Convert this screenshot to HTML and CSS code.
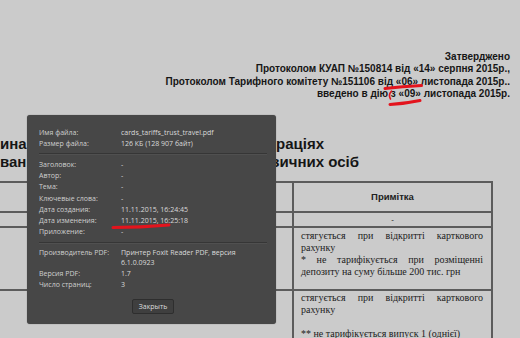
FILE: index.html
```html
<!DOCTYPE html>
<html lang="uk">
<head>
<meta charset="utf-8">
<title>Тарифи</title>
<link rel="stylesheet" href="styles.css">
</head>
<body>
<main class="doc">
  <div class="approval">
    <p>Затверджено</p>
    <p>Протоколом КУАП №150814 від «14» серпня 2015р.,</p>
    <p>Протоколом Тарифного комітету №151106 від «06» листопада 2015р..</p>
    <p>введено в дію з «09» листопада 2015р.</p>
  </div>
  <h1 class="title">
    <span class="title-line"><span class="title-left">инаги</span><span class="title-right">раціях</span></span>
    <span class="title-line"><span class="title-left narrow">ванн</span><span class="title-right">зичних осіб</span></span>
  </h1>
  <table class="tariffs">
    <colgroup><col class="col-main"><col class="col-note"></colgroup>
    <tr class="row-head"><th></th><th>Примітка</th></tr>
    <tr class="row-dash"><td></td><td class="center">-</td></tr>
    <tr class="row-a"><td></td><td><p>стягується при відкритті карткового рахунку</p><p>* не тарифікується при розміщенні депозиту на суму більше 200 тис. грн</p></td></tr>
    <tr class="row-b"><td></td><td><p>стягується при відкритті карткового рахунку</p><p class="spaced">** не тарифікується випуск 1 (однієї)</p></td></tr>
  </table>
</main>

<section class="props" aria-label="Свойства документа">
  <dl class="group">
    <dt>Имя файла:</dt><dd>cards_tariffs_trust_travel.pdf</dd>
    <dt>Размер файла:</dt><dd>126 КБ (128 907 байт)</dd>
  </dl>
  <hr class="sep">
  <dl class="group">
    <dt>Заголовок:</dt><dd>-</dd>
    <dt>Автор:</dt><dd>-</dd>
    <dt>Тема:</dt><dd>-</dd>
    <dt>Ключевые слова:</dt><dd>-</dd>
    <dt>Дата создания:</dt><dd>11.11.2015, 16:24:45</dd>
    <dt>Дата изменения:</dt><dd>11.11.2015, 16:25:18</dd>
    <dt>Приложение:</dt><dd>-</dd>
  </dl>
  <hr class="sep">
  <dl class="group">
    <dt>Производитель PDF:</dt><dd>Принтер Foxit Reader PDF, версия 6.1.0.0923</dd>
    <dt>Версия PDF:</dt><dd>1.7</dd>
    <dt>Число страниц:</dt><dd>3</dd>
  </dl>
  <div class="actions"><button class="btn" type="button">Закрыть</button></div>
</section>

<svg class="marks" width="520" height="338" viewBox="0 0 520 338" aria-hidden="true">
  <path d="M385 88.5 Q 402 86.5 421.5 85.5"/>
  <path d="M390 104.5 Q 406 103.5 420 100.5"/>
  <path class="thin" d="M391.5 91 Q 388 95 390.5 99"/>
  <path d="M113 227.5 Q 140 227.5 169 225"/>
</svg>
</body>
</html>
```

FILE: styles.css
```css
html, body {
  margin: 0;
  padding: 0;
}

body {
  width: 520px;
  height: 338px;
  overflow: hidden;
  background: #cbcbcb;
  position: relative;
  font-family: "Liberation Sans", Arial, sans-serif;
  color: #161616;
}

.doc {
  padding-top: 51px;
}

.approval {
  text-align: right;
  padding-right: 10px;
  font-weight: bold;
  font-size: 10px;
  line-height: 12.3px;
}

.approval p {
  margin: 0;
}

.title {
  margin: 35px 0 0;
  font-size: 15px;
  line-height: 17.7px;
  font-weight: bold;
}

.title-line {
  display: flex;
  white-space: nowrap;
}

.title-left {
  width: 276px;
  overflow: hidden;
  flex: none;
}

.title-left.narrow {
  width: 272px;
}

.tariffs {
  margin: 10px 0 0 -6px;
  width: 499px;
  table-layout: fixed;
  border-collapse: separate;
  border-spacing: 0;
  border: 1px solid #5c5c5c;
}

.col-note {
  width: 199px;
}

.tariffs th,
.tariffs td {
  border: 1px solid #5c5c5c;
  padding: 0;
  vertical-align: top;
}

.tariffs th {
  height: 28px;
  vertical-align: middle;
  font-size: 9.5px;
  font-weight: bold;
  text-align: center;
  color: #222;
}

.row-dash td {
  height: 13px;
  font-size: 8px;
  line-height: 13px;
}

.center {
  text-align: center;
}

.row-a td,
.row-b td {
  font-family: "Liberation Serif", "Times New Roman", serif;
  font-size: 10px;
  line-height: 12.2px;
  color: #1c1c1c;
}

.row-a td:last-child,
.row-b td:last-child {
  padding: 2px 8px 0 7px;
  text-align: justify;
}

.row-a td {
  height: 59px;
}

.row-a p,
.row-b p {
  margin: 0;
}

.row-b td:last-child {
  padding-top: 1px;
}

.row-b p.spaced {
  margin-top: 12px;
}

/* properties dialog */
.props {
  position: absolute;
  left: 27px;
  top: 115px;
  width: 249px;
  height: 209px;
  box-sizing: border-box;
  padding: 12.9px 9px 0 12px;
  background: #474747;
  border-radius: 3px;
  box-shadow: 0 0 1px rgba(0, 0, 0, 0.5);
  font-family: "Open Sans", "Noto Sans", sans-serif;
  font-size: 7px;
  line-height: 9.6px;
  color: #cfcfcf;
}

.group {
  display: grid;
  grid-template-columns: 82px 1fr;
  row-gap: 1.7px;
  margin: 0;
}

.group dt,
.group dd {
  margin: 0;
}

.group dd {
  color: #dadada;
}

.sep {
  border: 0;
  border-top: 1px solid #363636;
  border-bottom: 1px solid #505050;
  margin: 4.6px 0 4.4px;
  height: 0;
}

.actions {
  display: flex;
  justify-content: center;
  margin-top: 9.5px;
}

.btn {
  width: 42px;
  height: 15px;
  padding: 0;
  box-sizing: border-box;
  border: 1px solid #2e2e2e;
  border-radius: 2px;
  background: #3f3f3f;
  color: #dcdcdc;
  font-family: "Open Sans", "Noto Sans", sans-serif;
  font-size: 7px;
  line-height: 13px;
}

.marks {
  position: absolute;
  left: 0;
  top: 0;
  pointer-events: none;
}

.marks path {
  fill: none;
  stroke: #e3141d;
  stroke-width: 3;
  stroke-linecap: round;
}

.marks path.thin {
  stroke-width: 1.6;
}
```
